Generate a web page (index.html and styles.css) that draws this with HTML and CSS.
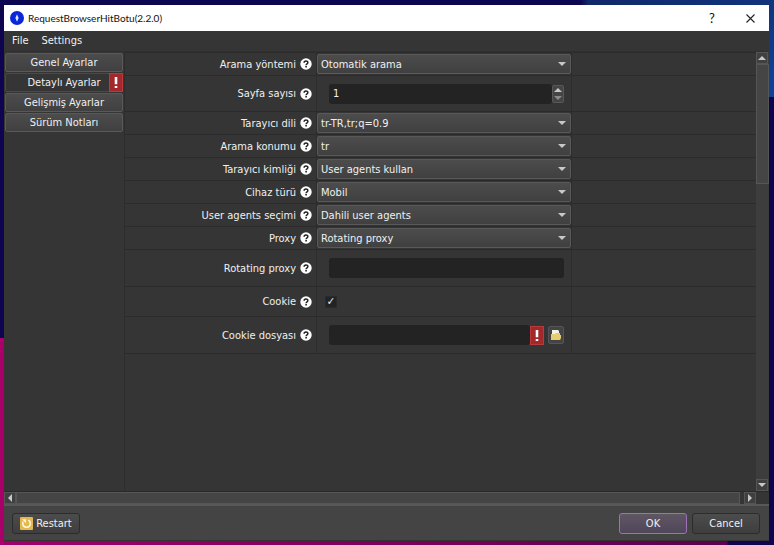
FILE: index.html
```html
<!DOCTYPE html>
<html lang="tr">
<head>
    <meta charset="UTF-8">
    <meta name="viewport" content="width=device-width, initial-scale=1.0">
    <title>RequestBrowserHitBotu(2.2.0)</title>
    <link rel="stylesheet" href="styles.css">
</head>
<body>
    <svg class="sprite" aria-hidden="true">
        <symbol id="help" viewBox="0 0 12 12">
            <circle cx="6" cy="6" r="5.7" fill="#fff"/>
            <path d="M4.1 4.8C4.1 2.4 7.9 2.4 7.9 4.6C7.9 5.9 6.1 5.8 6.1 7.2" fill="none" stroke="#222" stroke-width="1.5"/>
            <rect x="5.3" y="8" width="1.6" height="1.5" fill="#222"/>
        </symbol>
        <symbol id="warn" viewBox="0 0 14 19">
            <path d="M5.5 3h3v8.5h-3zM5.5 13.5h3v2.5h-3z" fill="#fff"/>
        </symbol>
    </svg>
    <div class="window">
        <header class="titlebar">
            <svg class="logo" viewBox="0 0 14 14">
                <circle cx="7" cy="7" r="7" fill="#0a28d8"/>
                <path d="M7 3.2L8.6 7L7 10.8L5.4 7z" fill="#dfe6ff"/>
            </svg>
            <h1>RequestBrowserHitBotu(2.2.0)</h1>
            <button class="title-btn" aria-label="Help">?</button>
            <button class="title-btn" aria-label="Close">
                <svg width="9" height="9" viewBox="0 0 9 9"><path d="M0.5 0.5L8.5 8.5M8.5 0.5L0.5 8.5" stroke="#222" stroke-width="1.1"/></svg>
            </button>
        </header>
        <nav class="menubar">
            <button>File</button>
            <button>Settings</button>
        </nav>
        <div class="main">
            <aside class="sidebar">
                <button class="tab">Genel Ayarlar</button>
                <button class="tab active">Detaylı Ayarlar<svg class="warn"><use href="#warn"/></svg></button>
                <button class="tab">Gelişmiş Ayarlar</button>
                <button class="tab">Sürüm Notları</button>
            </aside>
            <form class="form" id="settings">
                <div class="row">
                    <label for="method">Arama yöntemi <svg class="help"><use href="#help"/></svg></label>
                    <div class="cell select"><select id="method"><option>Otomatik arama</option></select></div>
                </div>
                <div class="row row-spin">
                    <label for="pages">Sayfa sayısı <svg class="help"><use href="#help"/></svg></label>
                    <div class="cell field">
                        <input type="number" id="pages" value="1">
                        <div class="spin">
                            <button type="button" aria-label="Up"><i class="arrow up"></i></button>
                            <button type="button" aria-label="Down"><i class="arrow down dim"></i></button>
                        </div>
                    </div>
                </div>
                <div class="row">
                    <label for="lang">Tarayıcı dili <svg class="help"><use href="#help"/></svg></label>
                    <div class="cell select"><select id="lang"><option>tr-TR,tr;q=0.9</option></select></div>
                </div>
                <div class="row">
                    <label for="location">Arama konumu <svg class="help"><use href="#help"/></svg></label>
                    <div class="cell select"><select id="location"><option>tr</option></select></div>
                </div>
                <div class="row">
                    <label for="identity">Tarayıcı kimliği <svg class="help"><use href="#help"/></svg></label>
                    <div class="cell select"><select id="identity"><option>User agents kullan</option></select></div>
                </div>
                <div class="row">
                    <label for="device">Cihaz türü <svg class="help"><use href="#help"/></svg></label>
                    <div class="cell select"><select id="device"><option>Mobil</option></select></div>
                </div>
                <div class="row">
                    <label for="agents">User agents seçimi <svg class="help"><use href="#help"/></svg></label>
                    <div class="cell select"><select id="agents"><option>Dahili user agents</option></select></div>
                </div>
                <div class="row">
                    <label for="proxy">Proxy <svg class="help"><use href="#help"/></svg></label>
                    <div class="cell select"><select id="proxy"><option>Rotating proxy</option></select></div>
                </div>
                <div class="row row-text">
                    <label for="rotating">Rotating proxy <svg class="help"><use href="#help"/></svg></label>
                    <div class="cell field"><input type="text" id="rotating"></div>
                </div>
                <div class="row row-check">
                    <label for="cookie">Cookie <svg class="help"><use href="#help"/></svg></label>
                    <div class="cell check"><input type="checkbox" id="cookie" checked></div>
                </div>
                <div class="row row-text">
                    <label for="cookiefile">Cookie dosyası <svg class="help"><use href="#help"/></svg></label>
                    <div class="cell field">
                        <input type="text" id="cookiefile">
                        <svg class="warn"><use href="#warn"/></svg>
                        <button type="button" class="browse" aria-label="Browse">
                            <svg width="12" height="12" viewBox="0 0 12 12">
                                <path d="M2 1h6l1 1v5H2z" fill="#f4f1e6"/>
                                <path d="M1 5h4l1-1h4v2h1v3l-1 2H1z" fill="#e6cd6d"/>
                            </svg>
                        </button>
                    </div>
                </div>
            </form>
            <div class="vscroll">
                <button aria-label="Scroll up"><i class="arrow up"></i></button>
                <div class="track"><div class="thumb"></div></div>
                <button aria-label="Scroll down"><i class="arrow down"></i></button>
            </div>
        </div>
        <div class="hscroll">
            <button aria-label="Scroll left"><i class="arrow left"></i></button>
            <div class="thumb"></div>
            <button aria-label="Scroll right"><i class="arrow right"></i></button>
        </div>
        <footer class="footer">
            <button class="btn restart">
                <svg width="13" height="13" viewBox="0 0 13 13">
                    <rect width="13" height="13" rx="1" fill="#e3b94f"/>
                    <path d="M3.2 4.6A3.8 3.8 0 1 0 8.2 3.1" fill="none" stroke="#fff6d8" stroke-width="1.6"/>
                    <path d="M2 2.2h4v4z" fill="#fff6d8"/>
                </svg>
                Restart
            </button>
            <button class="btn ok">OK</button>
            <button class="btn">Cancel</button>
        </footer>
    </div>
</body>
</html>
```
FILE: styles.css
```css
* {
    box-sizing: border-box;
}
body {
    margin: 0;
    height: 100vh;
    padding: 5px 5px 4px 4px;
    display: flex;
    background:
        linear-gradient(#a80068, #a80068) left bottom / 4px 38% no-repeat,
        linear-gradient(90deg, #a00068, #5c004c) left bottom / 94% 5px no-repeat,
        linear-gradient(#10347c, #0f429c) right top / 5px 97px no-repeat,
        linear-gradient(90deg, #0d0650 75%, #10286c 76%, #10347c) left top / 100% 5px no-repeat,
        #0e0450;
    font-family: "DejaVu Sans Condensed", "DejaVu Sans", sans-serif;
    font-size: 11px;
    color: #f0f0f0;
}
button, input, select {
    font: inherit;
    color: inherit;
    margin: 0;
    padding: 0;
    border: none;
    background: none;
}
.sprite {
    display: none;
}
.window {
    flex: 1;
    display: flex;
    flex-direction: column;
    background: #353535;
}

/* title bar and menu */
.titlebar {
    height: 26px;
    display: flex;
    align-items: center;
    background: #fff;
    color: #111;
    font-family: Lato, sans-serif;
}
.logo {
    width: 14px;
    height: 14px;
    margin: 0 4px 0 6px;
}
.titlebar h1 {
    flex: 1;
    margin: 0;
    font-size: 10px;
    font-weight: normal;
}
.title-btn {
    width: 38px;
    height: 26px;
    font-size: 13px;
}
.menubar {
    height: 21px;
    padding: 0 8px 1px;
    display: flex;
    gap: 13px;
    border-bottom: 1px solid #303030;
}

/* left tabs */
.main {
    flex: 1;
    display: flex;
    min-height: 0;
}
.sidebar {
    width: 120px;
    padding: 1px;
    display: flex;
    flex-direction: column;
    gap: 1px;
}
.tab {
    position: relative;
    height: 19px;
    background: linear-gradient(#4c4c4c, #404040);
    border: 1px solid #595959;
    border-radius: 2px;
}
.tab.active {
    background: #353535;
    border-color: #4a4a4a;
}
.warn {
    width: 14px;
    height: 19px;
    background: #a2282b;
    border: 1px solid #b83a3d;
}
.tab .warn {
    position: absolute;
    top: -1px;
    right: -1px;
}

/* settings grid */
.form {
    flex: 1;
    border-top: 1px solid #2b2b2b;
    border-left: 1px solid #2d2d2d;
}
.row {
    height: 23px;
    display: grid;
    grid-template-columns: 192px 255px 1fr;
    border-bottom: 1px solid #2b2b2b;
}
.row-spin {
    height: 36px;
}
.row-text {
    height: 37px;
}
.row-check {
    height: 30px;
}
.row label {
    display: flex;
    align-items: center;
    justify-content: flex-end;
    gap: 4px;
    padding-right: 4px;
    border-right: 1px solid #2d2d2d;
}
.help {
    width: 12px;
    height: 12px;
}
.cell {
    display: flex;
    align-items: center;
    border-right: 1px solid #2d2d2d;
}
.select {
    position: relative;
}
select {
    appearance: none;
    width: 100%;
    height: 20px;
    padding: 0 3px;
    background: linear-gradient(#4c4c4c, #404040);
    border: 1px solid #595959;
    border-radius: 2px;
}
.select::after {
    content: "";
    position: absolute;
    right: 5px;
    border: 4px solid transparent;
    border-top-color: #c8c8c8;
    border-bottom: none;
}
.field {
    padding: 0 7px 0 12px;
}
.field input {
    flex: 1;
    min-width: 0;
    height: 20px;
    padding: 0 4px;
    background: #232323;
    border-radius: 3px;
}
input[type="number"] {
    appearance: textfield;
}
input[type="number"]::-webkit-inner-spin-button {
    display: none;
}
.spin {
    width: 12px;
    height: 18px;
    display: flex;
    flex-direction: column;
    background: #454545;
    border: 1px solid #585858;
    border-radius: 2px;
}
.spin button {
    flex: 1;
    display: flex;
    align-items: center;
    justify-content: center;
}
.check {
    padding-left: 8px;
}
.check input {
    appearance: none;
    width: 12px;
    height: 12px;
    background: #232323;
    border: 1px solid #2a2a2a;
    display: flex;
    align-items: center;
    justify-content: center;
}
.check input:checked::before {
    content: "✓";
    font-weight: bold;
    line-height: 10px;
}
.browse {
    width: 16px;
    height: 18px;
    margin-left: 4px;
    display: flex;
    align-items: center;
    justify-content: center;
    background: #444;
    border: 1px solid #555;
    border-radius: 2px;
}

/* scrollbars */
.arrow {
    border: 4px solid transparent;
}
.up {
    border-bottom-color: #c8c8c8;
    border-top: none;
}
.down {
    border-top-color: #c8c8c8;
    border-bottom: none;
}
.left {
    border-right-color: #c8c8c8;
    border-left: none;
}
.right {
    border-left-color: #c8c8c8;
    border-right: none;
}
.dim {
    border-top-color: #8c8c8c;
}
.vscroll {
    width: 13px;
    display: flex;
    flex-direction: column;
    background: #3d3d3d;
}
.vscroll button, .hscroll button {
    width: 12px;
    height: 12px;
    display: flex;
    align-items: center;
    justify-content: center;
    background: #404040;
    border: 1px solid #555;
}
.track {
    flex: 1;
}
.thumb {
    background: #454545;
    border: 1px solid #565656;
}
.track .thumb {
    height: 29%;
}
.hscroll {
    height: 13px;
    padding-right: 13px;
    display: flex;
    border-top: 1px solid #2a2a2a;
}
.hscroll .thumb {
    flex: 1;
    margin-right: 4px;
}

/* bottom buttons */
.footer {
    height: 37px;
    padding: 7px 9px 0 8px;
    display: flex;
    align-items: flex-start;
    gap: 5px;
    background: #444;
    border-top: 2px solid #585858;
    border-bottom: 1px solid #333;
}
.btn {
    width: 68px;
    height: 21px;
    display: flex;
    align-items: center;
    justify-content: center;
    gap: 3px;
    background: linear-gradient(#4c4c4c, #3e3e3e);
    border: 1px solid #2c2c2c;
    border-radius: 3px;
}
.restart {
    margin-right: auto;
}
.ok {
    background: linear-gradient(#5f5664, #50465a);
    border-color: #a070b8;
}
```
